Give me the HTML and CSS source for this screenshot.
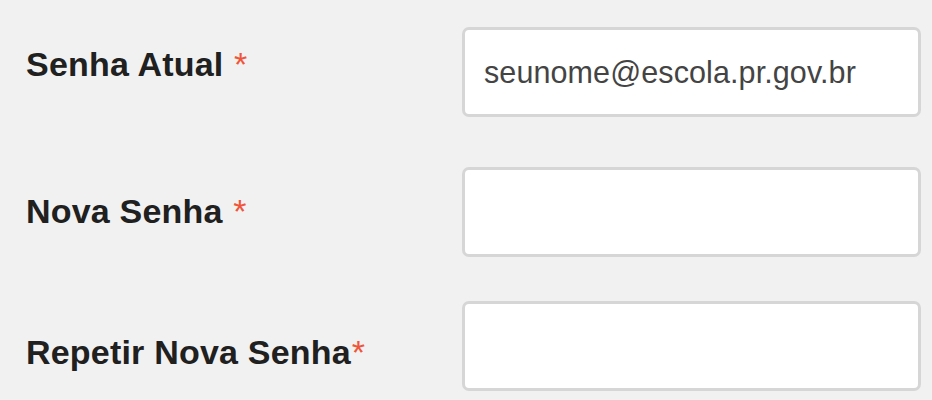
FILE: index.html
```html
<!DOCTYPE html>
<html lang="pt-BR">
<head>
<meta charset="utf-8">
<title>Alterar Senha</title>
<link rel="stylesheet" href="styles.css">
</head>
<body>
<form class="form">
  <div class="row row-1">
    <label class="label" for="atual">Senha Atual <span class="req">*</span></label>
    <div class="field"><input id="atual" class="input" type="text" value="seunome@escola.pr.gov.br"></div>
  </div>
  <div class="row row-2">
    <label class="label" for="nova">Nova Senha <span class="req">*</span></label>
    <div class="field"><input id="nova" class="input" type="password"></div>
  </div>
  <div class="row row-3">
    <label class="label" for="repetir">Repetir Nova Senha<span class="req">*</span></label>
    <div class="field"><input id="repetir" class="input" type="password"></div>
  </div>
</form>
</body>
</html>
```
FILE: styles.css
```css
html, body {
  margin: 0;
  padding: 0;
  background: #f1f1f1;
}
body {
  font-family: "Liberation Sans", Arial, sans-serif;
  overflow: hidden;
}
.form {
  padding: 27px 11px 0 26px;
  display: flex;
  flex-direction: column;
}
.row {
  display: flex;
  align-items: flex-start;
}
.row-2 { margin-top: 50px; }
.row-3 { margin-top: 44px; }
.label {
  width: 436px;
  font-size: 34px;
  font-weight: bold;
  letter-spacing: 0.2px;
  color: #202020;
  line-height: 39px;
}
.row-1 .label { margin-top: 18px; }
.row-2 .label { margin-top: 25px; }
.row-3 .label { margin-top: 32px; }
.req {
  color: #f0553a;
  font-weight: normal;
  margin-left: 1px;
}
.field {
  flex: 1;
}
.input {
  box-sizing: border-box;
  display: block;
  width: 459px;
  height: 90px;
  border: 3px solid #d6d6d6;
  border-radius: 7px;
  background: #fff;
  padding: 0 0 0 19px;
  font-family: "Liberation Sans", Arial, sans-serif;
  font-size: 30.5px;
  letter-spacing: 0.1px;
  color: #444;
  outline: none;
}
```
